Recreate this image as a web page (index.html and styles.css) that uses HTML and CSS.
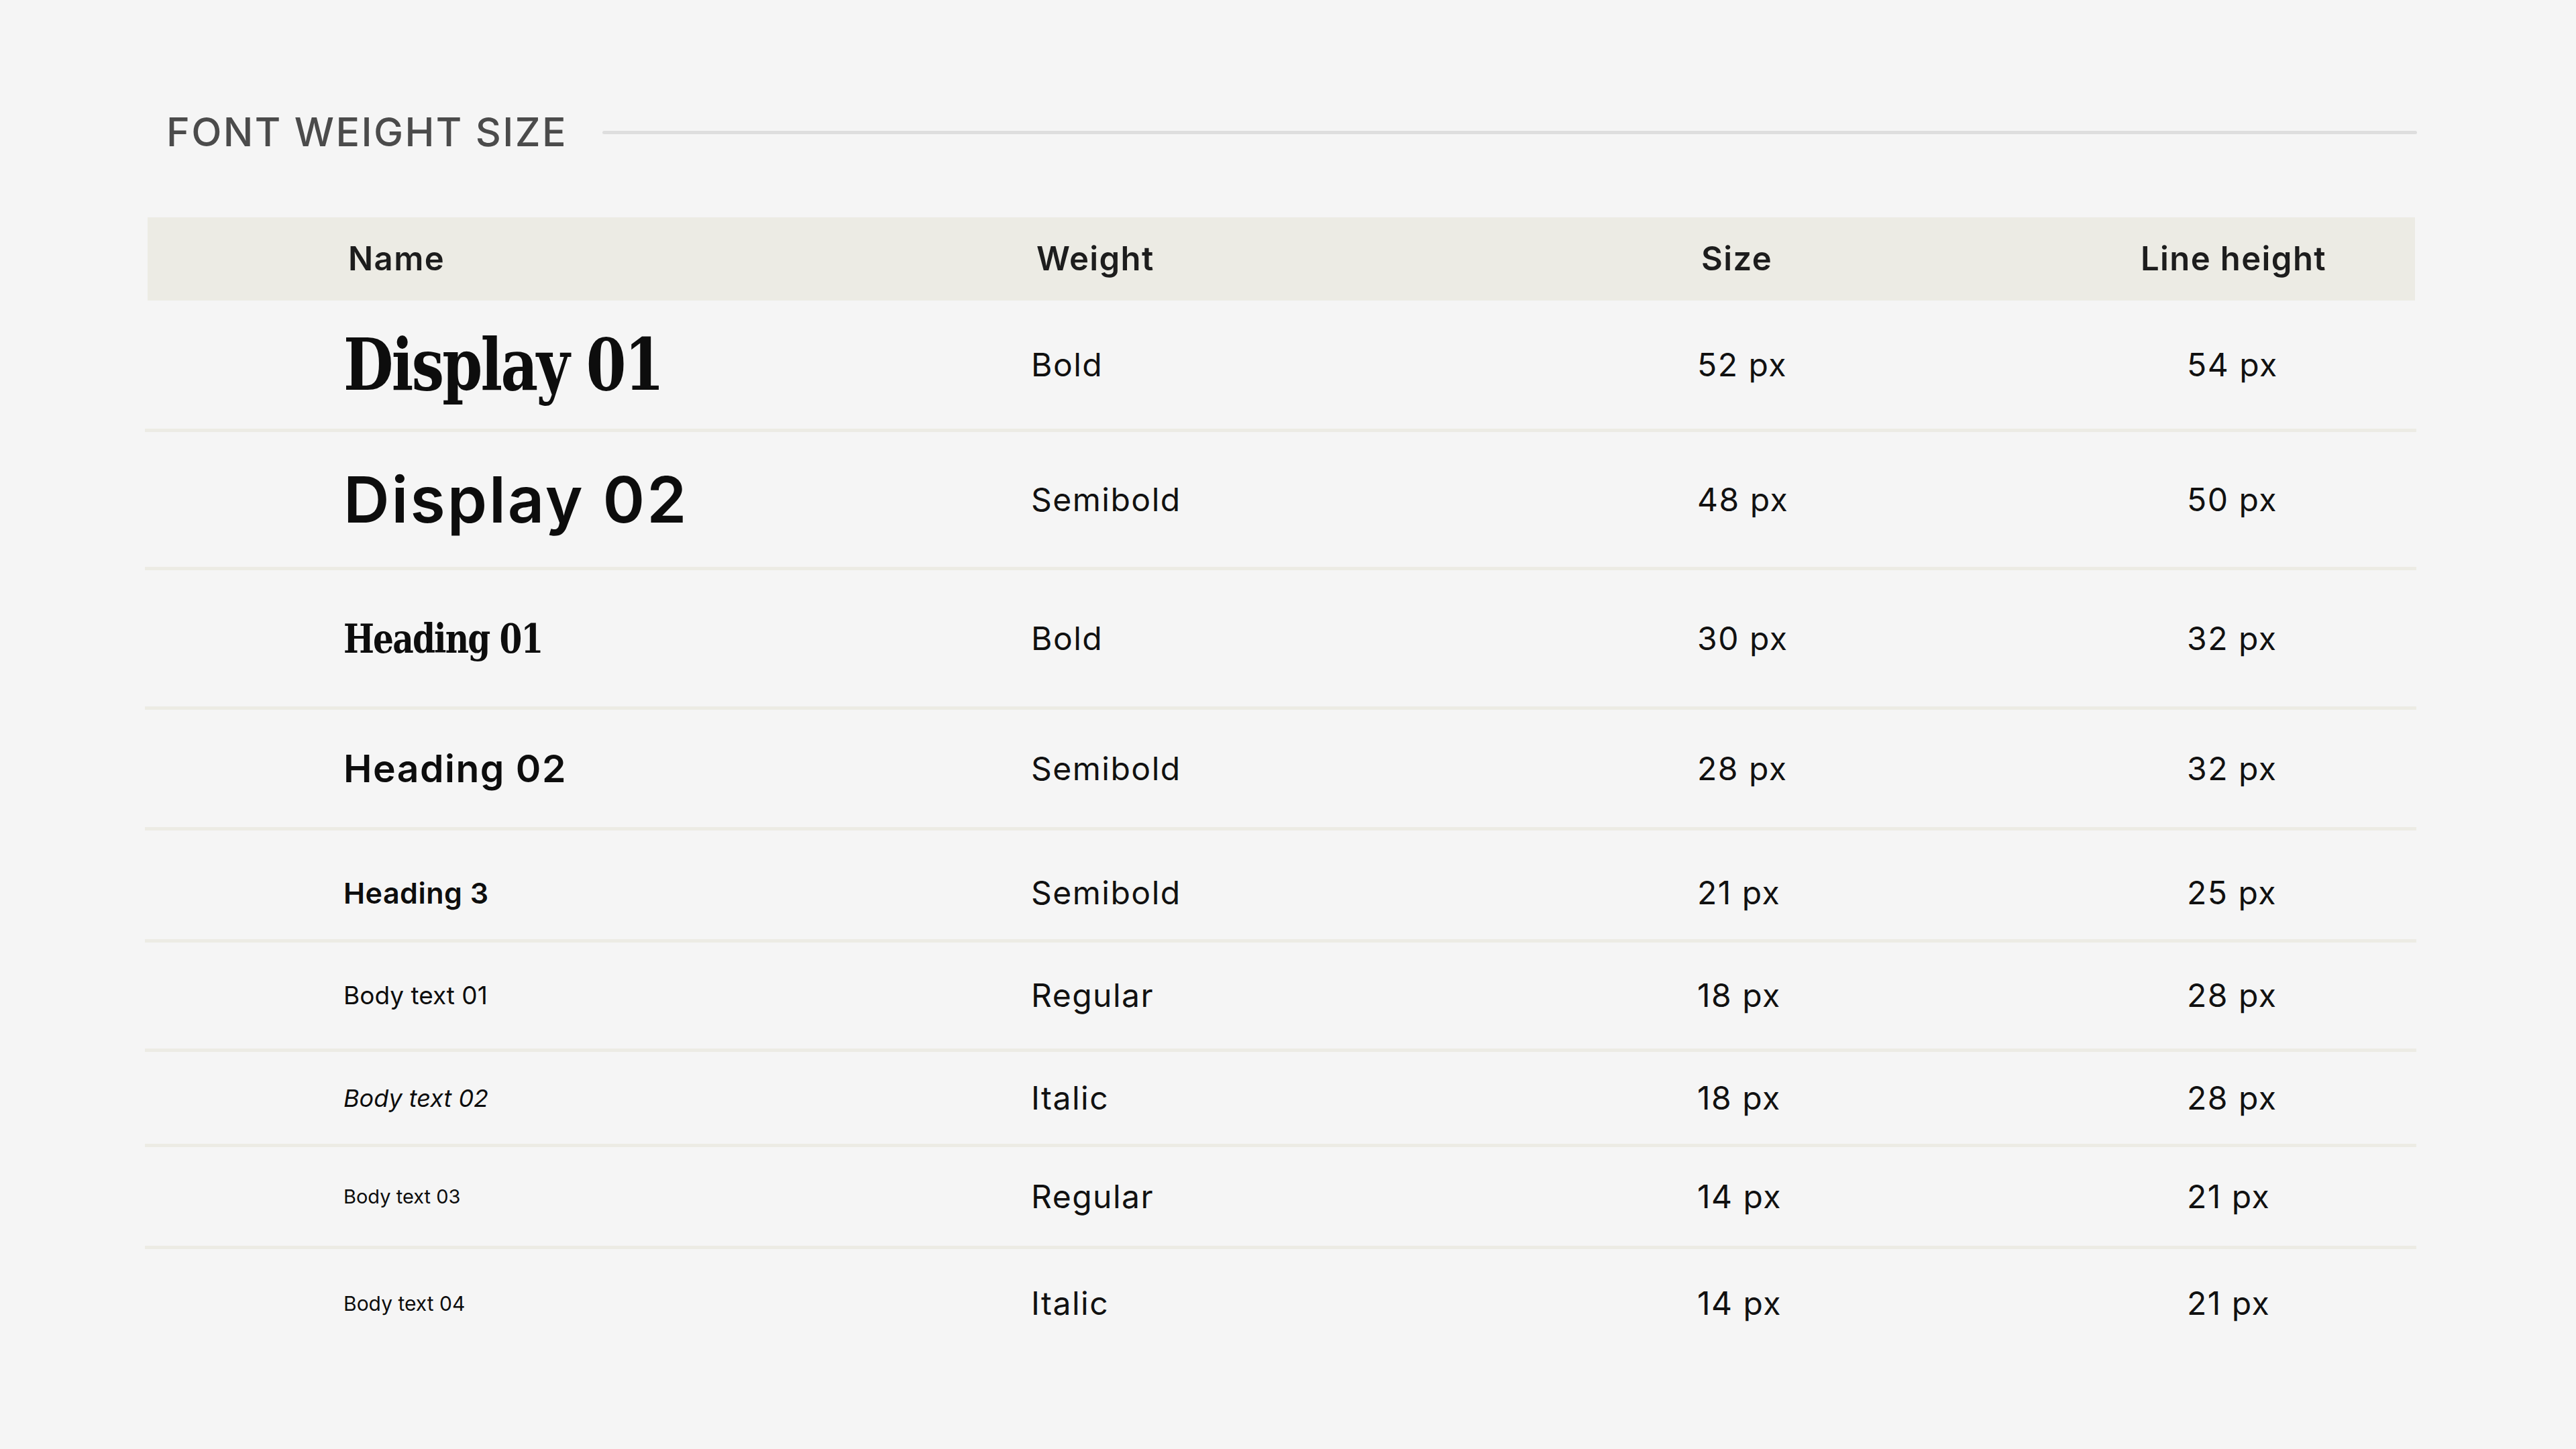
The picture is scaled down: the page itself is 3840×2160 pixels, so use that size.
FILE: index.html
```html
<!DOCTYPE html>
<html lang="en">
<head>
<meta charset="utf-8">
<title>Font weight size</title>
<link rel="stylesheet" href="styles.css">
</head>
<body>
<main class="page">
  <div class="title-row">
    <h1 class="title">FONT WEIGHT SIZE</h1>
    <div class="title-rule"></div>
  </div>

  <div class="table">
    <div class="thead">
      <div class="th">Name</div>
      <div class="th">Weight</div>
      <div class="th">Size</div>
      <div class="th">Line height</div>
    </div>

    <div class="row row-d1">
      <div class="name d1">Display 01</div>
      <div class="val">Bold</div>
      <div class="val">52 px</div>
      <div class="val">54 px</div>
    </div>
    <div class="row row-d2">
      <div class="name d2">Display 02</div>
      <div class="val">Semibold</div>
      <div class="val">48 px</div>
      <div class="val">50 px</div>
    </div>
    <div class="row row-h1">
      <div class="name h1">Heading 01</div>
      <div class="val">Bold</div>
      <div class="val">30 px</div>
      <div class="val">32 px</div>
    </div>
    <div class="row row-h2">
      <div class="name h2">Heading 02</div>
      <div class="val">Semibold</div>
      <div class="val">28 px</div>
      <div class="val">32 px</div>
    </div>
    <div class="row row-h3">
      <div class="name h3">Heading 3</div>
      <div class="val">Semibold</div>
      <div class="val">21 px</div>
      <div class="val">25 px</div>
    </div>
    <div class="row row-b1">
      <div class="name b1">Body text 01</div>
      <div class="val">Regular</div>
      <div class="val">18 px</div>
      <div class="val">28 px</div>
    </div>
    <div class="row row-b2">
      <div class="name b2">Body text 02</div>
      <div class="val">Italic</div>
      <div class="val">18 px</div>
      <div class="val">28 px</div>
    </div>
    <div class="row row-b3">
      <div class="name b3">Body text 03</div>
      <div class="val">Regular</div>
      <div class="val">14 px</div>
      <div class="val">21 px</div>
    </div>
    <div class="row row-b4 row-last">
      <div class="name b4">Body text 04</div>
      <div class="val">Italic</div>
      <div class="val">14 px</div>
      <div class="val">21 px</div>
    </div>
  </div>
</main>
</body>
</html>
```

FILE: styles.css
```css
* { box-sizing: border-box; }

html, body {
  margin: 0;
  padding: 0;
  background: #f5f5f5;
}

body {
  font-family: "Inter", "Noto Sans", sans-serif;
  color: #111111;
}

.page {
  width: 3840px;
  height: 2160px;
  padding: 157px 240px 0 220px;
}

.title-row {
  display: flex;
  align-items: center;
  gap: 52px;
  height: 80px;
  padding-left: 28px;
}

.title {
  margin: 0;
  font-size: 59px;
  line-height: 80px;
  font-weight: 500;
  color: #4b4b4b;
  letter-spacing: 2.4px;
  white-space: nowrap;
}

.title-rule {
  flex: 1;
  height: 5px;
  border-radius: 3px;
  background: #dedede;
  margin-right: -3px;
}

.table {
  margin-top: 87px;
}

.thead {
  display: grid;
  grid-template-columns: 1026px 991px 655px 1fr;
  align-items: center;
  height: 124px;
  padding-left: 299px;
  background: #ecebe4;
}

.th {
  font-size: 49px;
  font-weight: 600;
  color: #1d1d1d;
  line-height: 60px;
  letter-spacing: 1.4px;
}

.row {
  display: grid;
  grid-template-columns: 1025px 993px 730px 1fr;
  align-items: center;
  border-bottom: 5px solid #ecebe4;
  margin-left: -4px;
  margin-right: -2px;
  padding-left: 296px;
}

.row-last { border-bottom: none; }

.row-d1 { height: 196px; }
.row-d2 { height: 206px; }
.row-h1 { height: 208px; }
.row-h2 { height: 180px; }
.row-h3 { height: 167px; padding-top: 24px; }
.row-b1 { height: 163px; }
.row-b2 { height: 142px; }
.row-b3 { height: 152px; }
.row-b4 { height: 162px; }

.val {
  font-size: 48px;
  font-weight: 400;
  line-height: 60px;
  letter-spacing: 1.5px;
  color: #111111;
}

.name {
  color: #0d0d0d;
  white-space: nowrap;
}

.d1, .h1 {
  font-family: "DejaVu Serif", "Liberation Serif", serif;
  font-weight: 700;
  font-stretch: condensed;
  transform: scaleX(0.9);
  transform-origin: left center;
}

.d1 {
  font-size: 106px;
  line-height: 120px;
  letter-spacing: -3px;
}

.h1 {
  font-size: 60px;
  line-height: 70px;
  letter-spacing: -2px;
}

.d2 {
  font-size: 95px;
  font-weight: 600;
  line-height: 110px;
  letter-spacing: 3px;
}

.h2 {
  font-size: 57px;
  font-weight: 600;
  line-height: 70px;
  letter-spacing: 1.5px;
}

.h3 {
  font-size: 43px;
  font-weight: 600;
  line-height: 52px;
  letter-spacing: 0.5px;
}

.b1 {
  font-size: 37px;
  font-weight: 400;
  line-height: 46px;
}

.b2 {
  font-size: 36px;
  font-weight: 400;
  font-style: italic;
  line-height: 46px;
}

.b3 {
  font-size: 29px;
  font-weight: 400;
  line-height: 40px;
}

.b4 {
  font-size: 30px;
  font-weight: 400;
  line-height: 40px;
}
```
